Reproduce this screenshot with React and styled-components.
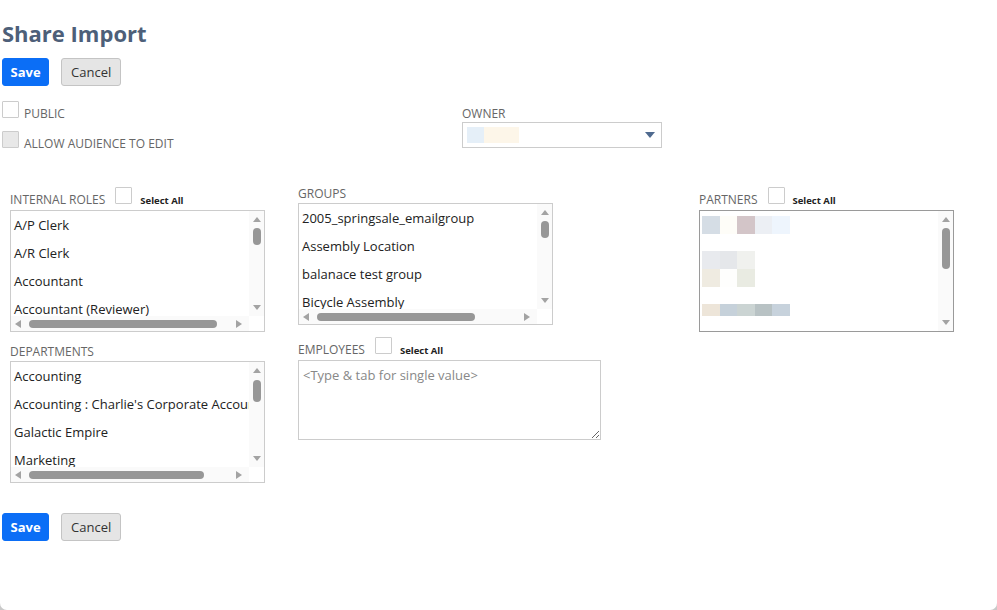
import React from "react";
import styled, { createGlobalStyle } from "styled-components";

const GlobalStyle = createGlobalStyle`
  html, body {
    margin: 0;
    padding: 0;
    background: #c9c9c9;
  }
  body {
    font-family: "Open Sans", "Liberation Sans", sans-serif;
  }
  * {
    box-sizing: border-box;
  }
`;

const roles = ["A/P Clerk", "A/R Clerk", "Accountant", "Accountant (Reviewer)", "Administrator"];
const groups = ["2005_springsale_emailgroup", "Assembly Location", "balanace test group", "Bicycle Assembly", "Board"];
const departments = ["Accounting", "Accounting : Charlie's Corporate Accounting", "Galactic Empire", "Marketing", "Sales"];

// blurred (redacted) cells in the partners list
const partnerChunks = [
  { gap: 5, rows: [["#d5dde5", "#fefdf8", "#d3c5c8", "#eceff4", "#eef5fd"]] },
  {
    gap: 17,
    rows: [
      ["#e8eaee", "#e5e7ea", "#f0f1ee"],
      ["#efebe1", "#fefefd", "#e9ebe2"],
    ],
  },
  { gap: 17, rows: [["#ede5d9", "#c6d1da", "#cbd4d3", "#b8c2c4", "#c7d2dc"]], short: true },
];

const App = () => {
  return (
    <Page>
      <GlobalStyle />
      <Title>Share Import</Title>
      <ButtonRow>
        <Button $primary>Save</Button>
        <Button>Cancel</Button>
      </ButtonRow>

      <TopSection>
        <CheckList>
          <CheckRow>
            <CheckBox />
            <CheckLabel>Public</CheckLabel>
          </CheckRow>
          <CheckRow>
            <CheckBox $disabled />
            <CheckLabel>Allow audience to edit</CheckLabel>
          </CheckRow>
        </CheckList>
        <OwnerField>
          <FieldLabel>Owner</FieldLabel>
          <Select>
            <BlurRow>
              <BlurCell $w={17} $h={16} $c="#e5eff8" />
              <BlurCell $w={35} $h={16} $c="#fdf6e9" />
            </BlurRow>
            <DownCaret />
          </Select>
        </OwnerField>
      </TopSection>

      <Columns>
        <Column $w={288} $gap={13}>
          <Section>
            <Header $check>
              <FieldLabel>Internal Roles</FieldLabel>
              <CheckBox $inline />
              <SelectAll>Select All</SelectAll>
            </Header>
            <ListBox items={roles} thumbTop={6} thumbH={17} hThumb={188} />
          </Section>
          <Section>
            <Header>
              <FieldLabel>Departments</FieldLabel>
            </Header>
            <ListBox items={departments} thumbTop={7} thumbH={22} hThumb={175} />
          </Section>
        </Column>

        <Column $w={401} $gap={12}>
          <Section>
            <Header>
              <FieldLabel>Groups</FieldLabel>
            </Header>
            <ListBox items={groups} thumbTop={6} thumbH={17} hThumb={158} />
          </Section>
          <Section>
            <Header $check>
              <FieldLabel>Employees</FieldLabel>
              <CheckBox $inline />
              <SelectAll>Select All</SelectAll>
            </Header>
            <TextArea placeholder="<Type & tab for single value>" readOnly />
          </Section>
        </Column>

        <Column $w={256} $gap={12}>
          <Section>
            <Header $check>
              <FieldLabel>Partners</FieldLabel>
              <CheckBox $inline />
              <SelectAll>Select All</SelectAll>
            </Header>
            <Box $dark>
              <BoxContent>
                {partnerChunks.map((chunk, i) => (
                  <BlurChunk key={i} $gap={chunk.gap}>
                    {chunk.rows.map((row, j) => (
                      <BlurRow key={j}>
                        {row.map((c, k) => (
                          <BlurCell key={k} $w={17.6} $h={chunk.short ? 12 : 18} $c={c} />
                        ))}
                      </BlurRow>
                    ))}
                  </BlurChunk>
                ))}
              </BoxContent>
              <VScroll thumbTop={6} thumbH={41} />
            </Box>
          </Section>
        </Column>
      </Columns>

      <ButtonRow $bottom>
        <Button $primary>Save</Button>
        <Button>Cancel</Button>
      </ButtonRow>
    </Page>
  );
};

const ListBox = ({ items, thumbTop, thumbH, hThumb }) => (
  <Box $hscroll>
    <BoxContent>
      {items.map((item) => (
        <Item key={item}>{item}</Item>
      ))}
    </BoxContent>
    <VScroll thumbTop={thumbTop} thumbH={thumbH} />
    <HBar>
      <Arrow $dir="left" />
      <HThumb style={{ width: hThumb }} />
      <Spacer />
      <Arrow $dir="right" />
    </HBar>
  </Box>
);

const VScroll = ({ thumbTop, thumbH }) => (
  <VBar>
    <Arrow $dir="up" />
    <VThumb style={{ marginTop: thumbTop, height: thumbH }} />
    <Spacer />
    <Arrow $dir="down" />
  </VBar>
);

const Page = styled.div`
  height: 610px;
  background: #fff;
  border-radius: 0 0 7px 7px;
  padding: 19px 0 0 2px;
  overflow: hidden;
`;

const Title = styled.h1`
  margin: 0;
  font-size: 22px;
  line-height: 28px;
  font-weight: 700;
  color: #4d5f79;
`;

const ButtonRow = styled.div`
  display: flex;
  gap: 12px;
  margin-top: ${(p) => (p.$bottom ? "30px" : "11px")};
`;

const Button = styled.button`
  height: 28px;
  padding: 0 ${(p) => (p.$primary ? "7.5px" : "9px")};
  border-radius: 3px;
  border: 1px solid ${(p) => (p.$primary ? "#0b6ef6" : "#c4c4c4")};
  background: ${(p) => (p.$primary ? "#0b6ef6" : "#e5e5e5")};
  color: ${(p) => (p.$primary ? "#fff" : "#333")};
  font-family: "Open Sans", "Liberation Sans", sans-serif;
  font-size: 13px;
  font-weight: ${(p) => (p.$primary ? 700 : 400)};
`;

const TopSection = styled.div`
  display: flex;
  margin-top: 15px;
`;

const CheckList = styled.div`
  width: 460px;
  display: flex;
  flex-direction: column;
  gap: 10px;
`;

const CheckRow = styled.div`
  display: flex;
  align-items: baseline;
`;

const CheckBox = styled.div`
  width: 17px;
  height: 17px;
  border: 1px solid #cccccc;
  border-radius: 1px;
  background: ${(p) => (p.$disabled ? "#e8e8e8" : "#fff")};
  margin-left: ${(p) => (p.$inline ? "10px" : "0")};
  flex-shrink: 0;
`;

const CheckLabel = styled.span`
  margin-left: 5px;
  font-size: 12px;
  line-height: 14px;
  color: #666;
  text-transform: uppercase;
`;

const OwnerField = styled.div`
  margin-top: 6px;
  display: flex;
  flex-direction: column;
`;

const FieldLabel = styled.span`
  font-size: 12px;
  line-height: 14px;
  color: #666;
  text-transform: uppercase;
  white-space: nowrap;
`;

const Select = styled.div`
  margin-top: 1px;
  width: 200px;
  height: 26px;
  border: 1px solid #cccccc;
  display: flex;
  align-items: center;
  justify-content: space-between;
  padding: 0 6px 0 4px;
`;

const DownCaret = styled.span`
  width: 0;
  height: 0;
  border-left: 5px solid transparent;
  border-right: 5px solid transparent;
  border-top: 6px solid #4f6a8f;
`;

const BlurChunk = styled.div`
  margin: ${(p) => p.$gap}px 0 0 2px;
`;

const BlurRow = styled.div`
  display: flex;
`;

const BlurCell = styled.span`
  width: ${(p) => p.$w}px;
  height: ${(p) => p.$h}px;
  background: ${(p) => p.$c};
`;

const Columns = styled.div`
  display: flex;
  margin: 36px 0 0 8px;
`;

const Column = styled.div`
  width: ${(p) => p.$w}px;
  flex-shrink: 0;
  display: flex;
  flex-direction: column;
  gap: ${(p) => p.$gap}px;
`;

const Section = styled.div`
  display: flex;
  flex-direction: column;
`;

const Header = styled.div`
  display: flex;
  align-items: baseline;
  margin-bottom: ${(p) => (p.$check ? "3px" : "2px")};
`;

const SelectAll = styled.span`
  margin-left: 8px;
  font-size: 9.5px;
  line-height: 12px;
  font-weight: 700;
  color: #222;
`;

const Box = styled.div`
  width: 255px;
  height: 122px;
  border: 1px solid ${(p) => (p.$dark ? "#9a9a9a" : "#cccccc")};
  display: grid;
  grid-template-columns: 1fr 15px;
  grid-template-rows: ${(p) => (p.$hscroll ? "1fr 15px" : "1fr")};
  background: #fff;
`;

const BoxContent = styled.div`
  overflow: hidden;
  min-width: 0;
`;

const Item = styled.div`
  height: 28px;
  line-height: 28px;
  padding: 0 3px;
  font-size: 13px;
  color: #222;
  white-space: nowrap;
`;

const VBar = styled.div`
  background: #fafafa;
  display: flex;
  flex-direction: column;
  align-items: center;
  padding: 6px 0;
`;

const HBar = styled.div`
  background: #fafafa;
  display: flex;
  align-items: center;
  padding: 0 7px 0 4px;
`;

const Spacer = styled.div`
  flex: 1;
`;

const VThumb = styled.div`
  width: 8px;
  border-radius: 4px;
  background: #979797;
`;

const HThumb = styled.div`
  height: 8px;
  margin-left: 8px;
  border-radius: 4px;
  background: #979797;
`;

const arrowShape = {
  up: "border-left: 4px solid transparent; border-right: 4px solid transparent; border-bottom: 5px solid #a3a3a3;",
  down: "border-left: 4px solid transparent; border-right: 4px solid transparent; border-top: 5px solid #a3a3a3;",
  left: "border-top: 4px solid transparent; border-bottom: 4px solid transparent; border-right: 6px solid #a3a3a3;",
  right: "border-top: 4px solid transparent; border-bottom: 4px solid transparent; border-left: 6px solid #a3a3a3;",
};

const Arrow = styled.span`
  width: 0;
  height: 0;
  flex-shrink: 0;
  ${(p) => arrowShape[p.$dir]}
`;

const TextArea = styled.textarea`
  display: block;
  width: 303px;
  height: 80px;
  margin: 0;
  border: 1px solid #cccccc;
  padding: 5px 4px;
  font-family: "Open Sans", "Liberation Sans", sans-serif;
  font-size: 13px;
  line-height: 18px;
  color: #222;
  outline: none;
  &::placeholder {
    color: #888;
  }
`;

export default App;
